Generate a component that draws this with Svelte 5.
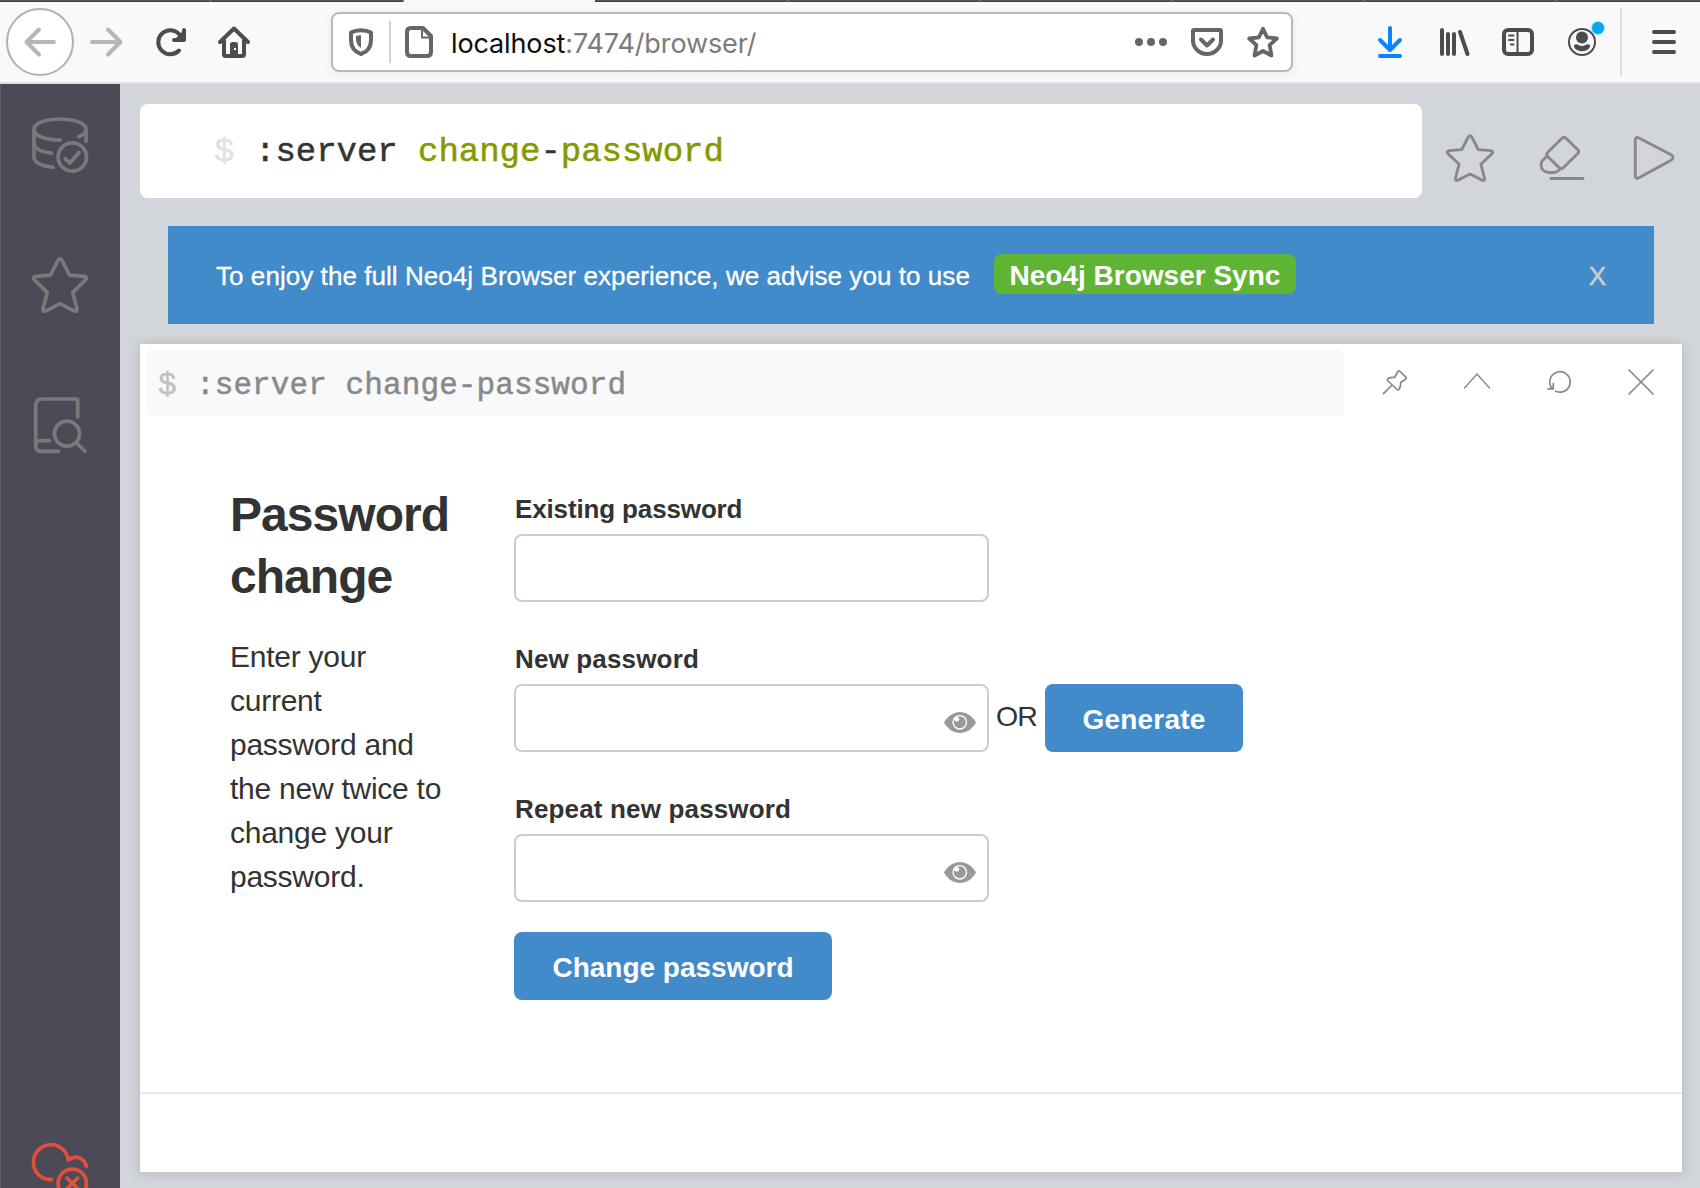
<script>
  const paragraph = 'Enter your current password and the new twice to change your password.';
  const tabs = [
    { id: 'a', width: 211, active: false },
    { id: 'b', width: 193, active: false },
    { id: 'c', width: 191, active: true },
    { id: 'd', width: 193, active: false },
    { id: 'e', width: 192, active: false },
    { id: 'f', width: 192, active: false },
    { id: 'g', width: 193, active: false },
    { id: 'h', width: 192, active: false },
    { id: 'i', width: 150, active: false }
  ];
</script>

{#snippet star()}
  <path d="M26 3.4Q28 .4 30 3.4L37.6 18.2 52.4 19.4Q56 20.4 53.4 23.2L40.7 35.3 45 51.8Q45.3 55.2 42 53.8L28 46.7 14 53.8Q10.7 55.2 11 51.8L15.3 35.3 2.6 23.2Q0 20.4 3.6 19.4L18.4 18.2Z" />
{/snippet}

{#snippet eye()}
  <svg class="eye" viewBox="0 0 32 21" aria-hidden="true">
    <path d="M0 10.5C4 3.5 10 0 16 0s12 3.500 16 10.500C28 17.500 22 21 16 21S4 17.500 0 10.500Z" fill="#999" />
    <circle cx="15.800" cy="10.300" r="6.700" fill="#999" stroke="#fff" stroke-width="1.400" />
    <circle cx="12.800" cy="7.300" r="2.400" fill="#fff" />
  </svg>
{/snippet}

<div class="window">
  <div class="tabs">
    {#each tabs as tab (tab.id)}
      <span class="tab" class:active={tab.active} style:width="{tab.width}px"></span>
    {/each}
  </div>

  <nav class="toolbar">
    <button class="back" aria-label="Back">
      <svg viewBox="0 0 32 32" class="ic faded"><path d="M30 16H3M15 3.500L2.500 16 15 28.500" /></svg>
    </button>
    <svg viewBox="0 0 32 32" class="ic faded forward"><path d="M2 16H29M18 3.500L30.500 16 18 28.500" /></svg>
    <svg viewBox="0 0 32 32" class="ic reload">
      <path d="M25 24.500A12 12 0 1 1 25.500 8.500" />
      <path d="M30 4V14H20Z" fill="#4c4c4f" stroke="none" />
      <path d="M30 4V14H20" />
    </svg>
    <svg viewBox="0 0 32 32" class="ic home">
      <path d="M2 16L16 2.500 30 16M6 14V28.500Q6 30 8 30H24Q26 30 26 28.500V14" />
      <path d="M12 30V18.500Q12 16 14.500 16H17.500Q20 16 20 18.500V30Z" fill="#4c4c4f" stroke="none" />
      <circle cx="17" cy="23" r="1.200" fill="#fff" stroke="none" />
    </svg>

    <div class="urlbar">
      <svg viewBox="0 0 32 32" class="ic grey">
        <path d="M6 6.500C9 4.800 13 4.200 16 4.200S23 4.800 26 6.500V14C26 21 22.500 25.800 16 28 9.500 25.800 6 21 6 14Z" />
        <path d="M11 10L16 9V22C12.500 20 11 16.500 11 13Z" fill="#666" stroke="none" />
      </svg>
      <span class="urlsep"></span>
      <svg viewBox="0 0 32 32" class="ic grey">
        <path d="M8 2H20L28 10V26Q28 30 24 30H8Q4 30 4 26V6Q4 2 8 2Z" />
        <path d="M19 3V11.500H28" stroke-width="2" />
      </svg>
      <span class="url"><b>localhost</b>:7474/browser/</span>
      <svg viewBox="0 0 32 32" class="ic grey">
        <g fill="#666" stroke="none"><circle cx="4" cy="16" r="4" /><circle cx="16" cy="16" r="4" /><circle cx="28" cy="16" r="4" /></g>
      </svg>
      <svg viewBox="0 0 32 32" class="ic grey">
        <path d="M3 4H29Q30 4 30 5V14.500A14 13.500 0 0 1 2 14.500V5Q2 4 3 4ZM10 13.500L16 19.500 22 13.500" />
      </svg>
      <svg viewBox="0 0 32 32" class="ic grey">
        <path d="M16 2.800L20 11.300 29.800 12.500 22.600 19.200 24.500 29.500 16 25 7.500 29.500 9.400 19.200 2.200 12.500 12 11.300Z" stroke-width="3.800" />
      </svg>
    </div>

    <svg viewBox="0 0 32 32" class="ic download"><path d="M16 2V23M6 14L16 24 26 14M6 30H26" /></svg>
    <svg viewBox="0 0 32 32" class="ic"><path d="M4 4V28M10 8V28M16 8V28" /><path d="M22 6L29.500 28" /></svg>
    <svg viewBox="0 0 32 32" class="ic">
      <rect x="2" y="4" width="28" height="24" rx="4" />
      <path d="M15.500 5V27" stroke-width="2" />
      <path d="M7 9.500H11.500M7 14H11.500M9 18.500H11.500" stroke-width="2" />
    </svg>
    <span class="account">
      <svg viewBox="0 0 32 32" class="ic">
        <circle cx="16" cy="16" r="13" stroke-width="2" />
        <g fill="#4c4c4f" stroke="none">
          <circle cx="16" cy="11.500" r="6" />
          <path d="M8 19Q11 17.500 12.500 19 16 21 19.500 19 21 17.500 24 19 24.500 22 21 24 16 26.500 11 24 7.500 22 8 19Z" />
        </g>
      </svg>
      <i class="dot"></i>
    </span>
    <span class="navsep"></span>
    <svg viewBox="0 0 32 32" class="ic"><path d="M6 6H26M6 16H26M6 26H26" /></svg>
  </nav>

  <div class="app">
    <aside class="sidebar">
      <svg viewBox="0 0 56 56">
        <path d="M28.500 23C14 23 2 19 2 12.500S14 2 28 2 54 6 54 12.500C54 15.500 51 18 46.500 19.700M2 12.500V40C2 45.500 10 49 21 50.400M2 27C3 32 10 35 19.500 36M54 12.500V24.500" />
        <circle cx="40.300" cy="40" r="14.200" />
        <path d="M33.300 41.800L38 46 47 35.500" />
      </svg>
      <svg viewBox="0 0 56 56">{@render star()}</svg>
      <svg viewBox="0 0 56 56">
        <path d="M45.700 20V3Q45.700 2 44.500 2H10Q3.700 2 3.700 8.500V49Q3.700 54.300 9 54.300H26.500M3.700 49Q3.700 43.700 9 43.700H17.500" />
        <circle cx="35" cy="36.700" r="12.500" />
        <path d="M44.500 46L53 54.300" />
      </svg>
      <svg viewBox="0 0 56 56" class="cloud">
        <path d="M19.500 36.700A17.500 17.500 0 1 1 36.300 17.200C43 11.500 52 14.500 54.300 23.300" />
        <circle cx="40.300" cy="40.300" r="14.200" />
        <path d="M35 35L45.600 45.600M45.600 35L35 45.600" />
      </svg>
    </aside>

    <main class="main">
      <div class="editor-row">
        <div class="editor">
          <span class="prompt">$</span>
          <span class="cmd">:server <em>change</em>-<em>password</em></span>
        </div>
        <div class="editor-actions">
          <svg viewBox="0 0 56 56" class="fav">{@render star()}</svg>
          <svg viewBox="0 0 48 48">
            <path d="M24 4.300Q26 2.300 28 4.300L39.800 15.800Q41.500 17.500 39.800 19.500L25 34Q23 35.500 21.300 33.900L9.500 22.200Q8 20.300 9.600 18.500ZM9.500 21.500L5 26Q3 28 3 31 3.500 38 11 38.500H15.500Q18.500 38.500 20.500 36.500L22.500 34.500M13 44.500H45" />
          </svg>
          <svg viewBox="0 0 48 48">
            <path d="M5.300 5.500Q5.500 2.800 8.500 3.800L41.500 21Q44.500 23.500 41.500 26L8.500 44Q5.500 45 5.300 42Z" />
          </svg>
        </div>
      </div>

      <div class="banner">
        <span class="msg">To enjoy the full Neo4j Browser experience, we advise you to use</span>
        <span class="sync">Neo4j Browser Sync</span>
        <span class="dismiss">X</span>
      </div>

      <section class="frame">
        <header class="frame-head">
          <div class="frame-cmd"><span class="prompt">$</span><span class="cmd">:server change-password</span></div>
          <div class="frame-actions">
            <svg viewBox="0 0 24 24"><path d="M14.800 1.500Q16 .3 17.200 1.500L22.800 7.200Q23.800 8.500 22.500 9.200L17.700 12.500Q17.900 16.500 16 19.500 15 20.500 14 19.500L4.500 10.500Q3.800 9 5.500 8.300 8.500 7 11.500 7.500ZM8.500 15.500L.5 23.600" /></svg>
            <svg viewBox="0 0 24 24" class="thin"><path d="M-.5 18L12 4 24.500 18" /></svg>
            <svg viewBox="0 0 24 24"><path d="M5 18.300A10.200 10.200 0 1 1 8.700 21.200M1 18.800H6.300V13.500" /></svg>
            <svg viewBox="0 0 24 24"><path d="M0 0L24 24M24 0L0 24" /></svg>
          </div>
        </header>

        <div class="content">
          <div class="intro">
            <h3>Password change</h3>
            <p>{paragraph}</p>
          </div>
          <form class="form">
            <label for="existing" class="tight">Existing password</label>
            <div class="line"><input id="existing" type="password" /></div>
            <label for="fresh">New password</label>
            <div class="line">
              <span class="field"><input id="fresh" type="password" />{@render eye()}</span>
              <span class="or">OR</span>
              <button type="button" class="btn generate">Generate</button>
            </div>
            <label for="again">Repeat new password</label>
            <div class="line">
              <span class="field"><input id="again" type="password" />{@render eye()}</span>
            </div>
            <button type="button" class="btn submit">Change password</button>
          </form>
        </div>
        <footer class="frame-foot"></footer>
      </section>
    </main>
  </div>
</div>

<style>
  :global(body) {
    margin: 0;
    overflow: hidden;
  }
  .window,
  .window :global(*) {
    box-sizing: border-box;
  }
  .window {
    width: 1700px;
    height: 1188px;
    overflow: hidden;
    display: flex;
    flex-direction: column;
    font-family: 'Liberation Sans', Arial, sans-serif;
    color: #333;
  }
  svg {
    display: block;
    flex: none;
    fill: none;
    stroke-linecap: round;
    stroke-linejoin: round;
    overflow: visible;
  }

  .tabs {
    display: flex;
    height: 2px;
    flex: none;
    overflow: hidden;
    background: #f9f9fa;
  }
  .tab {
    flex: none;
    background: linear-gradient(#58585a 50%, #404042 50%);
    border-right: 1px solid #858587;
  }
  .tab.active {
    background: #f9f9fa;
    border: 0;
  }

  .toolbar {
    display: flex;
    align-items: center;
    height: 82px;
    flex: none;
    padding-left: 6px;
    background: #f9f9fa;
    border-bottom: 2px solid #e0e0e2;
  }
  .ic {
    width: 32px;
    height: 32px;
    stroke: #4c4c4f;
    stroke-width: 4;
  }
  .toolbar > .ic + .ic,
  .account {
    margin-left: 32px;
  }
  .toolbar > .forward {
    margin-left: 16px;
  }
  .ic.faded {
    stroke: #b6b6b7;
  }
  .ic.grey {
    stroke: #666;
  }
  .back {
    width: 68px;
    height: 68px;
    padding: 0;
    border: 2px solid #b1b1b2;
    border-radius: 50%;
    background: #fff;
    display: flex;
    align-items: center;
    justify-content: center;
  }
  .urlbar {
    width: 962px;
    height: 60px;
    margin: 0 81px;
    padding: 0 12px;
    display: flex;
    align-items: center;
    gap: 24px;
    background: #fff;
    border: 2px solid #b9b9ba;
    border-radius: 8px;
    box-shadow: 0 2px 8px rgba(0, 0, 0, 0.06);
  }
  .urlsep {
    width: 2px;
    height: 42px;
    margin: 0 -12px;
    background: #d2d2d3;
  }
  .url {
    flex: 1;
    margin-left: -8px;
    padding-top: 3px;
    font: 27px/32px Inter, sans-serif;
    letter-spacing: -0.12px;
    color: #7b7b7b;
    white-space: nowrap;
  }
  .url b {
    font-weight: 400;
    color: #0c0c0d;
  }
  .ic.download {
    stroke: #0a84ff;
  }
  .account {
    position: relative;
  }
  .dot {
    position: absolute;
    left: 25px;
    top: -5px;
    width: 14px;
    height: 14px;
    border-radius: 50%;
    background: #00a8f3;
    border: 1px solid #a8e4fb;
  }
  .navsep {
    width: 2px;
    height: 68px;
    margin: 0 26px 0 22px;
    background: #dedee0;
  }

  .app {
    display: flex;
    flex: 1;
    min-height: 0;
    background: #d2d5da;
  }
  .sidebar {
    width: 120px;
    flex: none;
    display: flex;
    flex-direction: column;
    align-items: center;
    gap: 84px;
    padding-top: 33px;
    background: #4d4a57;
    box-shadow: inset 1px 0 #5f5c69;
  }
  .sidebar svg {
    width: 56px;
    height: 56px;
    stroke: #797979;
    stroke-width: 3.7;
  }
  .sidebar .cloud {
    margin-top: auto;
    margin-bottom: -11px;
    stroke: #e34f38;
  }

  .main {
    flex: 1;
    padding: 20px 18px 16px 20px;
    display: flex;
    flex-direction: column;
  }
  .editor-row {
    display: flex;
    height: 94px;
    flex: none;
  }
  .editor {
    width: 1282px;
    background: #fff;
    border-radius: 8px;
    display: flex;
    padding: 28px 0 0 74px;
    font: 34px/40px 'Liberation Mono', monospace;
    white-space: pre;
    -webkit-text-stroke: 0.5px currentColor;
  }
  .editor .prompt {
    width: 41px;
    color: #e1e2e6;
  }
  .editor .cmd {
    letter-spacing: -0.02px;
  }
  .cmd em {
    font-style: normal;
    color: #859900;
  }
  .editor-actions {
    display: flex;
    align-items: center;
    gap: 44px;
    padding: 14px 0 0 24px;
  }
  .editor-actions svg {
    width: 48px;
    height: 48px;
    stroke: #888;
    stroke-width: 2.9;
  }
  .editor-actions .fav {
    stroke-width: 3.4;
  }

  .banner {
    height: 98px;
    flex: none;
    margin: 28px 28px 20px;
    padding: 2px 48px 0;
    display: flex;
    align-items: center;
    background: #428bca;
    color: #fff;
    font-size: 26px;
    white-space: nowrap;
  }
  .msg {
    letter-spacing: 0.06px;
    -webkit-text-stroke: 0.3px currentColor;
  }
  .sync {
    width: 302px;
    height: 40px;
    margin: -4px 0 0 24px;
    padding-top: 3px;
    border-radius: 8px;
    background: #5fb434;
    font-weight: 700;
    font-size: 28px;
    line-height: 38px;
    text-align: center;
  }
  .dismiss {
    margin-left: auto;
    color: #ccc;
    -webkit-text-stroke: 0.5px currentColor;
  }

  .frame {
    flex: 1;
    display: flex;
    flex-direction: column;
    background: #fff;
    box-shadow: 0 1px 12px rgba(0, 0, 0, 0.16);
  }
  .frame-head {
    display: flex;
    padding: 6px 6px 0;
  }
  .frame-cmd {
    width: 1198px;
    height: 66px;
    padding: 18px 0 0 12px;
    display: flex;
    background: #f8f9fb;
    border-radius: 6px;
    color: #898989;
    font: 31px/36px 'Liberation Mono', monospace;
    letter-spacing: 0.1px;
    white-space: pre;
    -webkit-text-stroke: 0.5px currentColor;
  }
  .frame-cmd .prompt {
    width: 38px;
    color: #bfc0c2;
  }
  .frame-actions {
    display: flex;
    gap: 58px;
    padding: 20px 0 0 39px;
  }
  .frame-actions svg {
    width: 24px;
    height: 24px;
    stroke: #888;
    stroke-width: 1.7;
  }
  .frame-actions .thin {
    stroke-width: 1.3;
  }

  .content {
    flex: 1;
    display: grid;
    grid-template-columns: 284px 1fr;
    padding-left: 90px;
  }
  .intro {
    padding: 68px 60px 0 0;
  }
  h3 {
    margin: 0;
    font-size: 48px;
    line-height: 62px;
    letter-spacing: -0.95px;
  }
  p {
    width: 220px;
    margin: 27px 0 0;
    font-size: 30px;
    line-height: 44px;
    letter-spacing: -0.25px;
  }
  .form {
    padding-top: 76px;
  }
  label {
    display: block;
    margin-bottom: 8px;
    padding-left: 1px;
    font-weight: 700;
    font-size: 26px;
    line-height: 34px;
    letter-spacing: 0.16px;
  }
  label.tight {
    letter-spacing: -0.14px;
  }
  .line {
    display: flex;
    height: 68px;
    margin-bottom: 40px;
  }
  .field {
    position: relative;
    display: flex;
  }
  input {
    width: 475px;
    height: 68px;
    margin: 0;
    background: #fff;
    border: 2px solid #ccc;
    border-radius: 8px;
  }
  .eye {
    position: absolute;
    right: 13px;
    top: 28px;
    width: 32px;
    height: 21px;
  }
  .or {
    width: 56px;
    padding-left: 7px;
    font-size: 28.5px;
    line-height: 64px;
    letter-spacing: -1px;
  }
  .btn {
    height: 68px;
    padding: 4px 0 0;
    border: 0;
    border-radius: 8px;
    background: #428bca;
    color: #fff;
    font: 700 28px 'Liberation Sans', Arial, sans-serif;
    letter-spacing: 0.2px;
  }
  .generate {
    width: 198px;
  }
  .submit {
    width: 318px;
    margin-top: -10px;
    display: block;
    letter-spacing: 0;
  }
  .frame-foot {
    height: 80px;
    flex: none;
    border-top: 2px solid #e6e9ef;
  }
</style>
